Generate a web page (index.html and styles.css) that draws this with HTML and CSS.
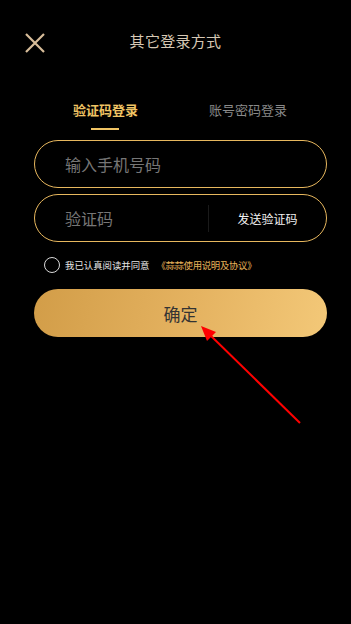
FILE: index.html
```html
<!DOCTYPE html>
<html lang="zh">
<head>
<meta charset="utf-8">
<link rel="stylesheet" href="styles.css">
</head>
<body>
<div class="page">
  <header class="header">
    <svg class="close" width="20" height="20" viewBox="0 0 20 20"><path d="M1 1L19 19M19 1L1 19" stroke="#d8bd9a" stroke-width="2.2" fill="none"/></svg>
    <div class="title">其它登录方式</div>
  </header>
  <nav class="tabs">
    <div class="tab active">验证码登录<span class="bar"></span></div>
    <div class="tab">账号密码登录</div>
  </nav>
  <div class="form">
    <div class="field"><span class="ph">输入手机号码</span></div>
    <div class="field code">
      <span class="ph">验证码</span>
      <span class="divider"></span>
      <span class="send">发送验证码</span>
    </div>
    <div class="agree">
      <span class="check"></span>
      <span class="agree-text">我已认真阅读并同意</span>
      <span class="link">《蒜蒜使用说明及协议》</span>
    </div>
    <button class="submit">确定</button>
  </div>
  <svg class="arrow" width="351" height="624" viewBox="0 0 351 624">
    <line x1="300" y1="423" x2="209" y2="334" stroke="#ff0000" stroke-width="2"/>
    <polygon points="201,326 216,332 207,341" fill="#ff0000"/>
  </svg>
</div>
</body>
</html>
```
FILE: styles.css
```css
* { box-sizing: border-box; }
html, body { margin: 0; padding: 0; background: #000; }
body { font-family: "Noto Sans CJK SC", "Noto Sans", sans-serif; width: 351px; height: 624px; overflow: hidden; }
.page { position: relative; width: 351px; height: 624px; }
.header { position: relative; height: 84px; display: flex; align-items: center; justify-content: center; padding-bottom: 4px; }
.close { position: absolute; left: 25px; top: 33px; }
.title { font-size: 15px; color: #d6c8b4; letter-spacing: 0.3px; }
.tabs { display: flex; padding-left: 73px; gap: 71px; height: 56px; padding-top: 17px; }
.tab { position: relative; font-size: 13px; line-height: 18px; color: #8a8a8a; height: 18px; }
.tab.active { color: #f0c464; font-weight: bold; }
.bar { position: absolute; left: 18px; top: 27px; width: 28px; height: 2px; background: #f0c464; }
.form { margin: 0 24px 0 34px; display: flex; flex-direction: column; }
.field { height: 48px; border: 1.2px solid #e7b75e; border-radius: 24px; display: flex; align-items: center; padding-left: 30px; margin-bottom: 6px; }
.ph { font-size: 16px; color: #767676; }
.code .ph { flex: 1; }
.divider { width: 1px; height: 27px; background: #1a1a1a; }
.send { width: 117px; text-align: center; font-size: 12px; color: #f2f2f2; }
.agree { display: flex; align-items: center; height: 22px; margin-top: 6px; padding-left: 10px; }
.check { width: 16px; height: 16px; border: 1.2px solid #d8d8d8; border-radius: 50%; margin-right: 5px; }
.agree-text { font-size: 9.4px; color: #e6e6e6; margin-right: 7px; }
.link { font-size: 9.4px; color: #e8b45a; letter-spacing: -0.3px; }
.submit { margin-top: 13px; height: 48px; border: none; border-radius: 24px; background: linear-gradient(100deg, #d29d48 0%, #e5b361 55%, #f3c878 100%); font-family: inherit; font-size: 17px; color: #333; padding: 0; }
.arrow { position: absolute; left: 0; top: 0; pointer-events: none; }
```
